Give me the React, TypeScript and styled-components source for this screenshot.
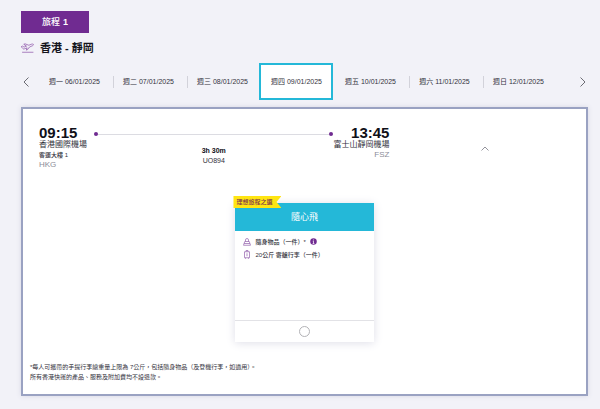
import React, { useState } from "react";
import styled, { createGlobalStyle } from "styled-components";

const purple = "#702b91";
const cyan = "#24b8d8";

const GlobalStyle = createGlobalStyle`
  * { box-sizing: border-box; }
  body {
    margin: 0;
    background: #f2f2f8;
    color: #33333d;
    font-family: "Liberation Sans", "Noto Sans CJK TC", sans-serif;
  }
  button { font: inherit; color: inherit; border: 0; background: none; padding: 0; cursor: pointer; }
  h1, h2, p, ul { margin: 0; padding: 0; }
  svg { display: block; }
`;

const Page = styled.main`
  padding: 11px 12px 13px 21px;
`;

const JourneyTag = styled.div`
  display: inline-flex;
  align-items: center;
  height: 22px;
  padding: 0 21px;
  background: ${purple};
  color: #fff;
  font-size: 9px;
  font-weight: 500;
  line-height: 12px;
  vertical-align: top;
  b { margin-left: 3px; }
`;

const Route = styled.h1`
  display: flex;
  align-items: center;
  gap: 6px;
  height: 30px;
  font-size: 11px;
  line-height: 16px;
  color: #14141c;
`;

const DateBar = styled.nav`
  display: flex;
  align-items: stretch;
  height: 37px;
`;

const Arrow = styled.button<{ $next?: boolean }>`
  display: flex;
  align-items: center;
  justify-content: ${(p) => (p.$next ? "flex-end" : "flex-start")};
  width: ${(p) => (p.$next ? 33 : 16)}px;
  padding: 0 2px;
`;

const Day = styled.button<{ $active: boolean; $divided: boolean }>`
  display: flex;
  flex: 1;
  align-items: center;
  border: 2px solid ${(p) => (p.$active ? cyan : "transparent")};
  background: ${(p) => (p.$active ? "#fff" : "transparent")};
  font-size: 7px;
  line-height: 10px;
  white-space: nowrap;
  &::before {
    content: "";
    width: 1px;
    height: 12px;
    background: ${(p) => (p.$divided ? "#d2d2da" : "transparent")};
  }
  span { flex: 1; text-align: center; }
`;

const FlightCard = styled.section`
  margin-top: 7px;
  padding: 17px 16px 12px 16px;
  border: 2px solid #9aa2c2;
  background: #fff;
  box-shadow: 0 0 5px #d8d8e4;
`;

const FlightRow = styled.div`
  display: flex;
  gap: 10px;
`;

const Timeline = styled.div`
  display: grid;
  flex: 0 0 66%;
  grid-template-columns: auto 1fr auto;
`;

const Endpoint = styled.div<{ $end?: boolean }>`
  display: flex;
  flex-direction: column;
  width: ${(p) => (p.$end ? 56 : 55)}px;
  text-align: ${(p) => (p.$end ? "right" : "left")};
  white-space: nowrap;
`;

const Time = styled.strong`
  font-size: 15px;
  line-height: 14px;
  color: #101018;
`;

const Airport = styled.span`
  font-size: 8px;
  line-height: 10px;
`;

const Terminal = styled.span`
  font-size: 6px;
  font-weight: 500;
  line-height: 10px;
`;

const Code = styled.span`
  font-size: 8px;
  line-height: 10px;
  color: #8c8c98;
`;

const FlightPath = styled.div`
  display: flex;
  flex-direction: column;
  align-items: center;
  font-size: 7px;
  line-height: 10px;
`;

const Track = styled.div`
  display: flex;
  align-items: center;
  align-self: stretch;
  justify-content: space-between;
  height: 16px;
  background: linear-gradient(#dcdce2, #dcdce2) center / 100% 1px no-repeat;
  &::before, &::after {
    content: "";
    width: 4px;
    height: 4px;
    border-radius: 50%;
    background: ${purple};
  }
`;

const Duration = styled.strong`
  margin-top: 4px;
  color: #101018;
`;

const Collapse = styled.button`
  display: flex;
  flex: 1;
  align-items: center;
  justify-content: center;
`;

const Fare = styled.article`
  display: flex;
  flex-direction: column;
  width: 26%;
  min-width: 138px;
  min-height: 139px;
  margin: 33px auto 0;
  background: #fff;
  box-shadow: 0 1px 9px #dedee8;
`;

const FareHead = styled.header`
  position: relative;
  height: 28px;
  background: ${cyan};
  color: #fff;
  text-align: center;
  h2 { font-size: 9px; font-weight: 400; line-height: 28px; }
`;

const Ribbon = styled.span`
  position: absolute;
  top: -7px;
  left: -2px;
  padding: 0 9px 0 3px;
  background: #ffe512;
  clip-path: polygon(0 0, 100% 0, calc(100% - 5px) 50%, 100% 100%, 0 100%);
  color: #80354c;
  font-size: 6px;
  font-weight: 500;
  line-height: 12px;
  white-space: nowrap;
`;

const Benefits = styled.ul`
  flex: 1;
  padding: 4px 8px;
  list-style: none;
`;

const Benefit = styled.li`
  display: flex;
  align-items: center;
  height: 13px;
  gap: 4px;
  font-size: 6px;
  font-weight: 500;
  line-height: 10px;
`;

const InfoButton = styled.button`
  display: flex;
`;

const FareFoot = styled.label`
  display: flex;
  align-items: center;
  justify-content: center;
  height: 22px;
  border-top: 1px solid #e2e2e6;
`;

const Radio = styled.input`
  appearance: none;
  width: 11px;
  height: 11px;
  margin: 0;
  border: 1px solid #b2b2b6;
  border-radius: 50%;
  background: #fff;
  &:checked { box-shadow: inset 0 0 0 2px #fff; background: ${purple}; }
`;

const Notes = styled.footer`
  margin: 20px 0 0 -9px;
  font-size: 6px;
  line-height: 10px;
`;

const days = [
  "週一 06/01/2025",
  "週二 07/01/2025",
  "週三 08/01/2025",
  "週四 09/01/2025",
  "週五 10/01/2025",
  "週六 11/01/2025",
  "週日 12/01/2025",
];

const PlaneIcon = () => (
  <svg width="13" height="10" viewBox="0 0 26 20" fill="none" stroke="#8a4fa6" strokeWidth="1.4" strokeLinejoin="round" strokeLinecap="round" aria-hidden="true">
    <path d="M1 7 3 6.2 6.2 8.2 11 6.3 5.5 2.6 8 1.6 15.7 4.5 20.5 2.5C22.5 1.7 24.6 2 25 3c.3 1-1 2-2.5 2.7L17 8l-4.2 5.5-2.2.8 1.6-4.6-5.7 2.1C5 12.3 4 11.7 3.3 10.7Z" />
    <path d="M3 18.5h21" />
  </svg>
);

const Chevron = ({ d, w, h, stroke }: { d: string; w: number; h: number; stroke: string }) => (
  <svg width={w} height={h} viewBox={`0 0 ${w} ${h}`} fill="none" stroke={stroke} strokeWidth="1" aria-hidden="true">
    <path d={d} />
  </svg>
);

const BagIcon = () => (
  <svg width="8" height="8" viewBox="0 0 16 16" fill="none" stroke="#9360ac" strokeWidth="1.4" strokeLinejoin="round" aria-hidden="true">
    <path d="M5 7V4a3 3 0 0 1 6 0v3M3.5 7h9l2.5 7.5H1ZM2.2 11h11.6" />
  </svg>
);

const SuitcaseIcon = () => (
  <svg width="8" height="9" viewBox="0 0 16 18" fill="none" stroke="#9360ac" strokeWidth="1.4" strokeLinejoin="round" aria-hidden="true">
    <path d="M3 3.5h10v12H3ZM6 3.5V1h4v2.500M5 15.500v2M11 15.500v2M8 6.500v6" />
  </svg>
);

const InfoIcon = () => (
  <svg width="7" height="7" viewBox="0 0 14 14" aria-hidden="true">
    <circle cx="7" cy="7" r="6.500" fill={purple} />
    <path d="M7 3v1.800M5.500 6.300H7V11M5.300 11h3.400" stroke="#fff" strokeWidth="1.500" fill="none" />
  </svg>
);

export default function App() {
  const [active, setActive] = useState(3);
  const [open, setOpen] = useState(true);

  return (
    <>
      <GlobalStyle />
      <Page>
        <JourneyTag>旅程 <b>1</b></JourneyTag>
        <Route><PlaneIcon />香港 - 靜岡</Route>
        <DateBar aria-label="出發日期">
          <Arrow aria-label="上一週"><Chevron w={6} h={10} stroke="#6c6c74" d="M5.500 .5 1 5l4.500 4.500" /></Arrow>
          {days.map((day, i) => (
            <Day
              key={day}
              $active={i === active}
              $divided={i > 0 && i !== active && i !== active + 1}
              onClick={() => setActive(i)}
            >
              <span>{day}</span>
            </Day>
          ))}
          <Arrow $next aria-label="下一週"><Chevron w={6} h={10} stroke="#6c6c74" d="M.5 .5 5 5 .5 9.500" /></Arrow>
        </DateBar>
        <FlightCard>
          <FlightRow>
            <Timeline>
              <Endpoint>
                <Time>09:15</Time>
                <Airport>香港國際機場</Airport>
                <Terminal>客運大樓 1</Terminal>
                <Code>HKG</Code>
              </Endpoint>
              <FlightPath>
                <Track />
                <Duration>3h 30m</Duration>
                <span>UO894</span>
              </FlightPath>
              <Endpoint $end>
                <Time>13:45</Time>
                <Airport>富士山靜岡機場</Airport>
                <Code>FSZ</Code>
              </Endpoint>
            </Timeline>
            <Collapse aria-label="收合" aria-expanded={open} onClick={() => setOpen(!open)}>
              <Chevron w={8} h={5} stroke="#94949c" d="M.5 4.500 4 1l3.500 3.500" />
            </Collapse>
          </FlightRow>
          {open && (
            <Fare>
              <FareHead>
                <Ribbon>理想旅程之選</Ribbon>
                <h2>隨心飛</h2>
              </FareHead>
              <Benefits>
                <Benefit>
                  <BagIcon />
                  隨身物品（一件）*
                  <InfoButton aria-label="隨身物品詳情"><InfoIcon /></InfoButton>
                </Benefit>
                <Benefit><SuitcaseIcon />20公斤 寄艙行李（一件）</Benefit>
              </Benefits>
              <FareFoot>
                <Radio type="radio" name="fare" aria-label="隨心飛" />
              </FareFoot>
            </Fare>
          )}
          <Notes>
            <p>*每人可攜帶的手提行李總重量上限為 7公斤，包括隨身物品（及登機行李，如適用）。</p>
            <p>所有香港快運的產品、服務及附加費均不設退款。</p>
          </Notes>
        </FlightCard>
      </Page>
    </>
  );
}
